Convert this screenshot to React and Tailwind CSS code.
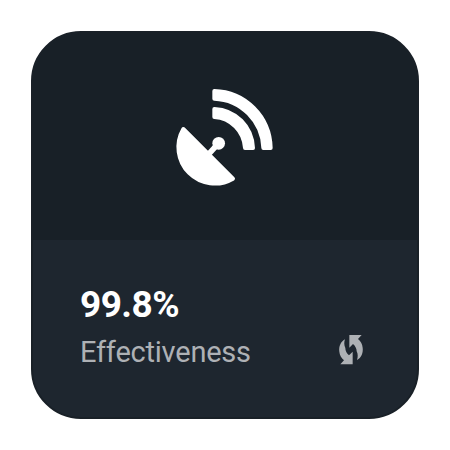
function SatelliteDish() {
  return (
    <svg className="h-[115px] w-[120px]" viewBox="0 0 360 345" fill="#fff" stroke="#fff" strokeLinejoin="round" aria-hidden="true">
      <path strokeWidth="12" d="M148 33C240 35 315 110 317 204H295C292 124 228 59 148 56Z" />
      <path strokeWidth="12" d="M148 87C212 90 261 139 264 204H240C237 154 198 114 148 111Z" />
      <path strokeWidth="12" d="M55 147L204 296A109 109 0 0 1 55 147Z" />
      <path d="M133 220L157 194" strokeWidth="17" />
      <circle cx="161" cy="190" r="19" stroke="none" />
    </svg>
  );
}

function RefreshArrows() {
  return (
    <svg className="h-[50px] w-[50px]" viewBox="0 0 150 150" fill="#aeb1b5" aria-hidden="true">
      <path d="M60 43C47 50 41 65 43 80C44 91 49 99 57 106L46 118H83V80L72 91C65 85 61 77 61 69C57 61 57 51 60 43Z" />
      <path d="M96 105C109 98 115 83 113 68C112 57 107 49 99 42L110 30H73V68L84 57C91 63 95 71 95 79C99 87 99 97 96 105Z" />
    </svg>
  );
}

export default function App() {
  return (
    <main className="flex h-[450px] w-[450px] items-center justify-center bg-white font-['Roboto',sans-serif]">
      <section className="flex h-[388px] w-[388px] flex-col overflow-hidden rounded-[50px] border-2 border-[#192027] bg-[#1e262f]">
        <div className="flex h-[207px] shrink-0 justify-center bg-[#182027] pt-[47px]">
          <SatelliteDish />
        </div>
        <div className="flex flex-1 items-end justify-between pr-[42px] pb-[42px] pl-[47px]">
          <div className="-mb-[1px]">
            <div className="text-[37px] leading-[47px] font-bold tracking-[-0.55px] text-white">99.8%</div>
            <div className="text-[29px] leading-[48px] tracking-[-0.22px] text-[#aeb1b5]">Effectiveness</div>
          </div>
          <RefreshArrows />
        </div>
      </section>
    </main>
  );
}
